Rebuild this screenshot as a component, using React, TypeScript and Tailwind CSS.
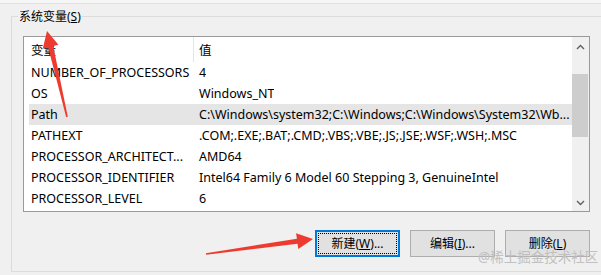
import React from "react";

const rows = [
  { name: "NUMBER_OF_PROCESSORS", value: "4" },
  { name: "OS", value: "Windows_NT" },
  { name: "Path", value: "C:\\Windows\\system32;C:\\Windows;C:\\Windows\\System32\\Wb...", selected: true },
  { name: "PATHEXT", value: ".COM;.EXE;.BAT;.CMD;.VBS;.VBE;.JS;.JSE;.WSF;.WSH;.MSC" },
  { name: "PROCESSOR_ARCHITECT...", value: "AMD64" },
  { name: "PROCESSOR_IDENTIFIER", value: "Intel64 Family 6 Model 60 Stepping 3, GenuineIntel" },
  { name: "PROCESSOR_LEVEL", value: "6" },
];

function Chevron({ up }: { up?: boolean }) {
  return (
    <svg width="9" height="6" viewBox="0 0 9 6" className="block">
      <path
        d={up ? "M1 5 L4.5 1.5 L8 5" : "M1 1 L4.5 4.5 L8 1"}
        fill="none"
        stroke="#606060"
        strokeWidth="1.4"
      />
    </svg>
  );
}

function Btn({ label, k, tail, focused }: { label: string; k: string; tail?: string; focused?: boolean }) {
  return (
    <button
      className={
        focused
          ? "w-[85px] h-[27px] bg-[#e1e1e1] border-2 border-[#0078d7] p-[1px] text-[12px] text-black"
          : "w-[85px] h-[27px] bg-[#e1e1e1] border border-[#adadad] text-[12px] text-black"
      }
    >
      <span
        className={
          focused
            ? "flex items-center justify-center w-full h-full border border-dotted border-black"
            : "flex items-center justify-center w-full h-full"
        }
      >
        {label}(<span className="underline">{k}</span>){tail}
      </span>
    </button>
  );
}

export default function App() {
  return (
    <div className="relative w-[601px] h-[275px] overflow-hidden bg-[#f0f0f0] font-['Noto_Sans','Noto_Sans_CJK_SC',sans-serif] text-black">
      <div className="h-[4px] bg-[#f6f6f6] border-b border-[#e2e2e2]" />

      {/* group box */}
      <div className="relative ml-[11px] mt-[12px] w-[590px] border-l border-t border-b border-[#dcdcdc] pl-[11px] pr-[11px] pt-[19px] pb-[14px]">
        <div className="absolute left-[6px] top-[-9px] px-[1px] bg-[#f0f0f0] text-[12px] leading-[18px]">
          系统变量(<span className="underline">S</span>)
        </div>

        {/* list view */}
        <div className="h-[176px] border border-[#9a9a9a] bg-white flex">
          <div className="flex-1 min-w-0 text-[12.5px]">
            <div className="flex h-[25px] items-center">
              <div className="w-[170px] h-full pl-[7px] pt-[3px] flex items-center border-r border-[#e5e5e5]">变量</div>
              <div className="pl-[5px] pt-[3px]">值</div>
            </div>
            {rows.map((r) => (
              <div
                key={r.name}
                className={
                  r.selected
                    ? "flex h-[21px] pt-[2px] items-center ml-[5px] bg-[#e5e5e5]"
                    : "flex h-[21px] pt-[2px] items-center ml-[5px]"
                }
              >
                <div className="w-[165px] pl-[2px] whitespace-nowrap overflow-hidden">{r.name}</div>
                <div className="pl-[5px] whitespace-nowrap overflow-hidden">{r.value}</div>
              </div>
            ))}
          </div>
          {/* scrollbar */}
          <div className="w-[17px] bg-[#f0f0f0] flex flex-col">
            <div className="h-[19px] flex items-center justify-center">
              <Chevron up />
            </div>
            <div className="h-[18px]" />
            <div className="h-[63px] bg-[#cdcdcd] mr-[1px]" />
            <div className="flex-1" />
            <div className="h-[17px] flex items-center justify-center">
              <Chevron />
            </div>
          </div>
        </div>

        {/* buttons */}
        <div className="flex justify-end gap-[10px] mt-[18px]">
          <Btn label="新建" k="W" tail="..." focused />
          <Btn label="编辑" k="I" tail="..." />
          <Btn label="删除" k="L" />
        </div>
      </div>

      {/* watermark */}
      <div className="absolute left-[478px] top-[247px] text-[13.5px] leading-[20px] text-[#c0c0c0] whitespace-nowrap">
        @稀土掘金技术社区
      </div>

      {/* annotation arrows */}
      <svg className="absolute inset-0 pointer-events-none" width="601" height="275" viewBox="0 0 601 275">
        <polygon
          points="47,31 58.4,44.8 53.2,46 67.8,116.8 66.2,117.2 48.2,47.4 42.8,48.4"
          fill="#ee3b30"
        />
        <polygon
          points="313,239 298.3,249.1 297.5,243.7 206.1,254.8 205.9,253.2 296.9,238.7 296.1,233.3"
          fill="#ee3b30"
        />
      </svg>
    </div>
  );
}
